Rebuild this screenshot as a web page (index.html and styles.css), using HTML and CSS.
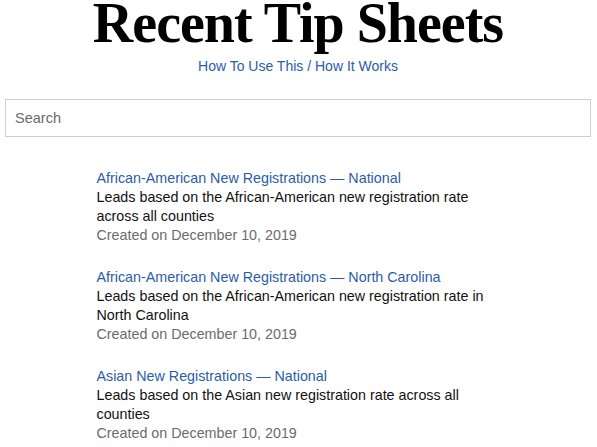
FILE: index.html
```html
<!DOCTYPE html>
<html lang="en">
<head>
<meta charset="utf-8">
<title>Recent Tip Sheets</title>
<link rel="stylesheet" href="styles.css">
</head>
<body>
  <header class="masthead">
    <h1 class="page-title">Recent Tip Sheets</h1>
    <a class="help-link" href="#">How To Use This / How It Works</a>
  </header>

  <div class="search">
    <input class="search-input" type="text" placeholder="Search">
  </div>

  <ul class="sheet-list">
    <li class="sheet">
      <a class="sheet-title" href="#">African-American New Registrations — National</a>
      <p class="sheet-desc">Leads based on the African-American new registration rate across all counties</p>
      <p class="sheet-date">Created on December 10, 2019</p>
    </li>
    <li class="sheet">
      <a class="sheet-title" href="#">African-American New Registrations — North Carolina</a>
      <p class="sheet-desc">Leads based on the African-American new registration rate in North Carolina</p>
      <p class="sheet-date">Created on December 10, 2019</p>
    </li>
    <li class="sheet">
      <a class="sheet-title" href="#">Asian New Registrations — National</a>
      <p class="sheet-desc">Leads based on the Asian new registration rate across all counties</p>
      <p class="sheet-date">Created on December 10, 2019</p>
    </li>
  </ul>
</body>
</html>
```

FILE: styles.css
```css
* {
  box-sizing: border-box;
}

body {
  margin: 0;
  padding: 0 6px 0 5px;
  background: #fff;
  font-family: "Liberation Sans", Arial, sans-serif;
  color: #111;
}

.masthead {
  display: flex;
  flex-direction: column;
  align-items: center;
  padding-top: 1px;
}

.page-title {
  margin: 0;
  font-family: "Liberation Serif", "Times New Roman", serif;
  font-weight: bold;
  font-size: 56px;
  line-height: 44px;
  letter-spacing: -1px;
  color: #000;
}

.help-link {
  margin-top: 12px;
  font-size: 14px;
  line-height: 18px;
  color: #2b5ca8;
  text-decoration: none;
}

.search {
  margin-top: 24px;
}

.search-input {
  display: block;
  width: 100%;
  height: 38px;
  padding: 0 9px;
  border: 1px solid #cfcfcf;
  border-radius: 0;
  font-family: inherit;
  font-size: 14.5px;
  color: #111;
  outline: none;
}

.search-input::placeholder {
  color: #6b6b6b;
}

.sheet-list {
  list-style: none;
  margin: 32px auto 0;
  padding: 0;
  width: 403px;
  display: flex;
  flex-direction: column;
  gap: 23px;
}

.sheet {
  display: flex;
  flex-direction: column;
  font-size: 14.3px;
  line-height: 19px;
}

.sheet-title {
  color: #2b5ca8;
  text-decoration: none;
}

.sheet-desc {
  margin: 0;
  color: #111;
}

.sheet-date {
  margin: 0;
  color: #6b6b6b;
}
```
